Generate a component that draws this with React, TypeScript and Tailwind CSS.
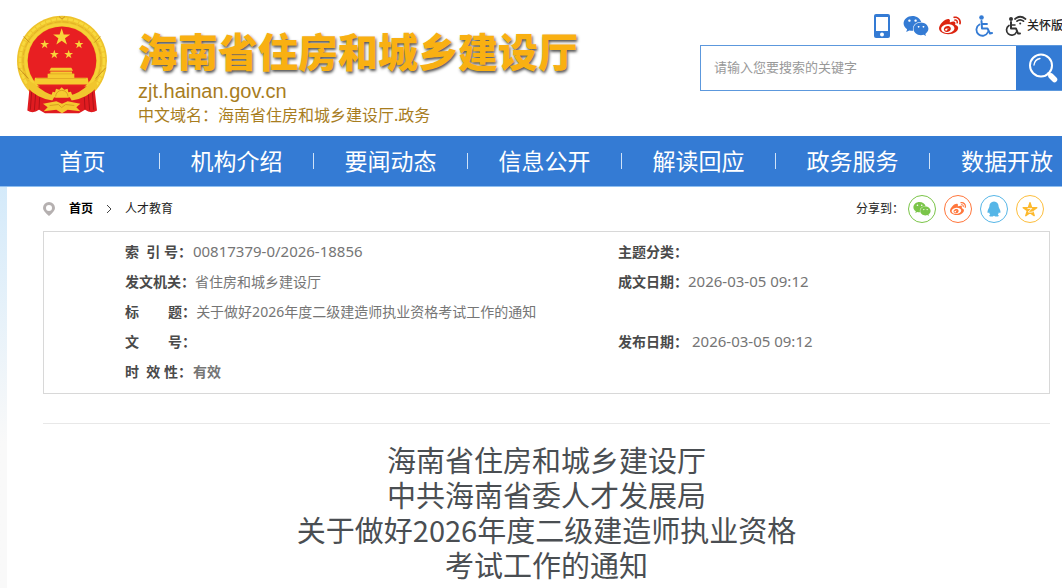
import { ReactNode } from "react";
import { FaWeibo, FaWeixin } from "react-icons/fa";

const navItems = ["首页", "机构介绍", "要闻动态", "信息公开", "解读回应", "政务服务", "数据开放"];

const titleLines = [
  "海南省住房和城乡建设厅",
  "中共海南省委人才发展局",
  "关于做好2026年度二级建造师执业资格",
  "考试工作的通知",
];

const STAR = "M0 -10 L2.3 -3.1 L9.5 -3.1 L3.7 1.2 L5.9 8.1 L0 3.9 L-5.9 8.1 L-3.7 1.2 L-9.5 -3.1 L-2.3 -3.1 Z";

function Emblem() {
  return (
    <svg viewBox="0 0 270 296" className="h-[99px] w-[90px] shrink-0" role="img" aria-label="国徽">
      {/* Wheat ring */}
      <circle cx="135" cy="137" r="135" fill="#eec32c" />
      <circle cx="135" cy="137" r="126" fill="none" stroke="#f8d93e" strokeWidth="8" strokeDasharray="14 3" />
      <circle cx="135" cy="137" r="117" fill="none" stroke="#dba722" strokeWidth="2" strokeDasharray="18 6" />
      <circle cx="135" cy="137" r="109" fill="none" stroke="#f6d237" strokeWidth="9" />
      <path d="M20 64 L38 82 M250 64 L232 82 M4 158 L34 190 M266 158 L236 190 M126 4 L135 12 L144 4" fill="none" stroke="#c99220" strokeWidth="3" />
      <circle cx="135" cy="137" r="103" fill="#e81f22" />

      {/* Drapes */}
      <path d="M38 214 L232 214 L240 286 Q222 297 204 284 L186 294 L84 294 L66 284 Q48 297 31 286 Z" fill="#e01b20" />
      <path d="M44 230 L40 284 M56 236 L52 286 M68 246 L66 282 M226 230 L230 284 M214 236 L218 286 M202 246 L204 282" stroke="#b01218" strokeWidth="3" />

      {/* Stars */}
      <g fill="#f9d43a">
        <path d={STAR} transform="translate(134 66) scale(2.7)" />
        <path d={STAR} transform="translate(83 88) scale(1.4)" />
        <path d={STAR} transform="translate(186 88) scale(1.4)" />
        <path d={STAR} transform="translate(112 118) scale(1.4)" />
        <path d={STAR} transform="translate(155 118) scale(1.4)" />
      </g>

      {/* Gate tower */}
      <path d="M102 158 H163 L168 167 H97 Z M100 169 H165 V176 H172 V188 H212 L216 208 H50 L54 188 H92 V176 H100 Z" fill="#f6cb30" />
      <path d="M96 176 H170 M58 190 H208" stroke="#d9a021" strokeWidth="2" />

      {/* Wheat stems and gear */}
      <path d="M34 196 L52 206 Q84 236 114 242 L106 256 Q60 250 28 214 Z M236 196 L218 206 Q186 236 156 242 L164 256 Q210 250 242 214 Z" fill="#f1c62e" />
      <path d="M102 244 L107 230 L114 231 L117 221 L127 224 L134 216 L142 224 L152 221 L154 231 L162 230 L167 244 L152 248 H117 Z" fill="#f6cb30" />
      <path d="M116 244 A18 18 0 0 1 153 244" fill="none" stroke="#d9a021" strokeWidth="3" />
      <path d="M78 266 L118 258 L135 266 L152 258 L190 266 L178 276 L190 288 L152 284 L135 294 L118 284 L80 288 L92 276 Z" fill="#f4c82f" />
      <path d="M98 271 L124 268 L134 277 L146 268 L172 271" fill="none" stroke="#d9a021" strokeWidth="3" />
    </svg>
  );
}

function PhoneIcon() {
  return (
    <svg viewBox="0 0 16 24" className="h-6 w-4">
      <rect width="16" height="24" rx="2" fill="#347bd4" />
      <rect x="2" y="3" width="12" height="14" fill="#fff" />
      <circle cx="8" cy="20.5" r="2" fill="#fff" />
    </svg>
  );
}

function WheelchairIcon() {
  return (
    <svg viewBox="0 0 18 22" className="h-[22px] w-[18px]" fill="none" stroke="#347bd4" strokeLinecap="round" strokeLinejoin="round">
      <circle cx="6.5" cy="2.5" r="2.3" fill="#347bd4" stroke="none" />
      <path d="M6.500 6 L7 13.500 H12.500 L15 18.500 L17 18" strokeWidth="2" />
      <path d="M7 9 H12" strokeWidth="1.800" />
      <path d="M4.500 9.500 A6 6 0 1 0 13 17" strokeWidth="1.800" />
    </svg>
  );
}

function CareIcon() {
  return (
    <svg viewBox="0 0 22 22" className="h-[22px] w-[22px]" fill="none" stroke="#333" strokeLinecap="round" strokeLinejoin="round">
      <circle cx="6" cy="4" r="2" fill="#333" stroke="none" />
      <path d="M6 7 V13.500 H11 L13 18.500 H15" strokeWidth="2" />
      <path d="M6 10 H10" strokeWidth="1.500" />
      <path d="M4 10.500 A5.200 5.200 0 1 0 11.500 17" strokeWidth="1.700" />
      <path d="M10 4 Q15 -0.500 20.500 4 M12 6.200 Q15 3.500 18.500 6.200" strokeWidth="1.700" />
      <circle cx="15.200" cy="8.500" r="1" fill="#333" stroke="none" />
    </svg>
  );
}

function SearchIcon() {
  return (
    <svg viewBox="0 0 30 30" className="h-[30px] w-[30px]" fill="none" stroke="#fff" strokeLinecap="round">
      <circle cx="13" cy="12.500" r="11" strokeWidth="2" />
      <path d="M6 12 A7.500 7.500 0 0 1 12 5.500" strokeWidth="1.300" />
      <path d="M20.500 20.500 L22 22" strokeWidth="3" />
      <path d="M23 23 L26.500 26.500" strokeWidth="5.500" />
    </svg>
  );
}

function PenguinIcon() {
  return (
    <svg viewBox="0 0 14 16" className="h-4 w-[14px]" fill="#56b6e7">
      <path d="M7 0.500 C10 0.500 11.600 2.700 11.600 5.300 C11.600 6.300 12.300 7.200 13 8.800 C13.700 10.500 13.600 12 13 12 C12.600 12 12.200 11.600 11.900 11.200 C11.800 12.100 11.400 12.800 10.800 13.400 C12.400 14.100 12 15.600 9.800 15.600 C8.500 15.600 7.600 15.200 7 14.700 C6.400 15.200 5.500 15.600 4.200 15.600 C2 15.600 1.600 14.100 3.200 13.400 C2.600 12.800 2.200 12.100 2.100 11.200 C1.800 11.600 1.400 12 1 12 C0.400 12 0.300 10.500 1 8.800 C1.700 7.200 2.400 6.300 2.400 5.300 C2.400 2.700 4 0.500 7 0.500 Z" />
    </svg>
  );
}

function QzoneIcon() {
  return (
    <svg viewBox="-11 -11 22 21" className="h-[15px] w-4">
      <path d={STAR} fill="#fdb92d" stroke="#fdb92d" strokeWidth="2" strokeLinejoin="round" />
      <path d="M-3.500 -2 H2.500 L-2.500 3 Q1 4 5 2.500" fill="none" stroke="#fff" strokeWidth="1.200" />
    </svg>
  );
}

function Field({ label, children, className = "" }: { label: string; children?: ReactNode; className?: string }) {
  return (
    <div className="flex h-[30px] items-center text-sm">
      <dt className="font-bold whitespace-pre text-[#4a4a4a]">{label}</dt>
      <dd className={`whitespace-nowrap text-[#757575] ${className}`}>{children}</dd>
    </div>
  );
}

export default function App() {
  return (
    <div className="overflow-hidden bg-white font-['Noto_Sans','Noto_Sans_CJK_SC',sans-serif]">
      {/* Header */}
      <header className="flex h-[136px] items-start pl-[17px]">
        <a href="#" className="mt-[15px] flex shrink-0 text-[#a87d1e]">
          <Emblem />
          <div className="ml-[31px] pt-3">
            <h1 className="text-[40px] leading-[50px] font-black text-[#f9b012] [text-shadow:1px_2px_3px_#555]">
              海南省住房和城乡建设厅
            </h1>
            <p className="font-['Liberation_Sans',sans-serif] text-xl leading-[28px]">zjt.hainan.gov.cn</p>
            <p className="text-base leading-5">中文域名：海南省住房和城乡建设厅.政务</p>
          </div>
        </a>

        <div className="ml-auto w-[362px] shrink-0 pt-[11px]">
          <div className="ml-[174px] flex h-[30px] items-center whitespace-nowrap text-[#347bd4]">
            <a href="#" aria-label="手机版"><PhoneIcon /></a>
            <a href="#" aria-label="微信" className="ml-[13px]"><FaWeixin className="h-6 w-[26px]" /></a>
            <a href="#" aria-label="微博" className="ml-[10px] text-[#dc2410]"><FaWeibo className="h-[22px] w-[22px]" /></a>
            <a href="#" aria-label="无障碍" className="ml-[14px]"><WheelchairIcon /></a>
            <a href="#" className="ml-3 flex items-center text-xs font-medium text-[#222]">
              <CareIcon />
              关怀版
            </a>
          </div>
          <form className="mt-1 flex h-[46px] border-y border-[#5c98dd]">
            <input
              type="text"
              aria-label="搜索"
              placeholder="请输入您要搜索的关键字"
              className="min-w-0 flex-1 border-l border-[#5c98dd] px-[13px] text-[13px] outline-none placeholder:text-[#999]"
            />
            <button type="button" aria-label="搜索" className="flex w-[46px] items-center justify-end bg-[#347bd4] pr-1">
              <SearchIcon />
            </button>
          </form>
        </div>
      </header>

      {/* Main nav */}
      <nav className="flex h-[51px] border-b border-[#8fbff0] bg-[#347bd4] pl-[6px]">
        {navItems.map((item, i) => (
          <div key={item} className="flex w-[154px] shrink-0 items-center">
            <a href="#" className="flex-1 text-center text-[23px] whitespace-nowrap text-white">{item}</a>
            {i < navItems.length - 1 && <span className="h-4 w-px bg-[#cfe2f8]" />}
          </div>
        ))}
      </nav>

      <div className="flex">
        <div className="w-[7px] shrink-0 bg-linear-to-b from-[#d4eafa] to-[#f9f9f9] to-60%" />

        <main className="min-w-0 flex-1 pr-3 pb-8 pl-9">
          {/* Breadcrumb and share links */}
          <div className="flex h-11 items-center justify-between text-xs text-[#222]">
            <div className="flex items-center">
              <svg viewBox="0 0 12 14" className="h-[14px] w-3">
                <path d="M6 0 A6 6 0 0 1 12 6 Q12 9 6 14 Q0 9 0 6 A6 6 0 0 1 6 0 Z M6 3 A3 3 0 1 0 6 9 A3 3 0 1 0 6 3 Z" fill="#b5b0b0" fillRule="evenodd" />
              </svg>
              <a href="#" className="ml-[14px] font-bold text-black">首页</a>
              <svg viewBox="0 0 6 8" className="mx-[13px] h-2 w-[6px]" fill="none" stroke="#444">
                <path d="M1 0 L5 4 L1 8" />
              </svg>
              <a href="#">人才教育</a>
            </div>
            <div className="mr-[6px] flex items-center gap-2">
              <span className="-mr-1">分享到：</span>
              <a href="#" aria-label="分享到微信" className="flex h-7 w-7 items-center justify-center rounded-full border border-[#7bc549] text-[#7bc549]">
                <FaWeixin className="h-4 w-[18px]" />
              </a>
              <a href="#" aria-label="分享到微博" className="flex h-7 w-7 items-center justify-center rounded-full border border-[#ff763b] text-[#ff763b]">
                <FaWeibo className="h-4 w-4" />
              </a>
              <a href="#" aria-label="分享到QQ" className="flex h-7 w-7 items-center justify-center rounded-full border border-[#56b6e7]">
                <PenguinIcon />
              </a>
              <a href="#" aria-label="分享到QQ空间" className="flex h-7 w-7 items-center justify-center rounded-full border border-[#fdbe3d]">
                <QzoneIcon />
              </a>
            </div>
          </div>

          {/* Document info */}
          <div className="grid grid-cols-[493px_1fr] border border-[#d8d8d8] pt-[5px] pb-[6px] pl-[81px]">
            <dl>
              <Field label="索  引 号：" className="pl-px text-[15px]">00817379-0/2026-18856</Field>
              <Field label="发文机关：">省住房和城乡建设厅</Field>
              <Field label="标        题：">关于做好2026年度二级建造师执业资格考试工作的通知</Field>
              <Field label="文        号：" />
              <Field label="时  效 性：" className="pl-px font-bold">有效</Field>
            </dl>
            <dl>
              <Field label="主题分类：" />
              <Field label="成文日期：" className="text-[15px]">2026-03-05 09:12</Field>
              <div className="h-[30px]" />
              <Field label="发布日期：" className="pl-1 text-[15px]">2026-03-05 09:12</Field>
            </dl>
          </div>

          {/* Article */}
          <article className="mt-[29px] border-t border-[#e8e8e8] pt-[18px]">
            <h2 className="text-center font-['Noto_Sans_CJK_SC',sans-serif] text-[29px] leading-[35px] text-[#4a4e52]">
              {titleLines.map((line) => (
                <span key={line} className="block whitespace-nowrap">{line}</span>
              ))}
            </h2>
          </article>
        </main>
      </div>
    </div>
  );
}
